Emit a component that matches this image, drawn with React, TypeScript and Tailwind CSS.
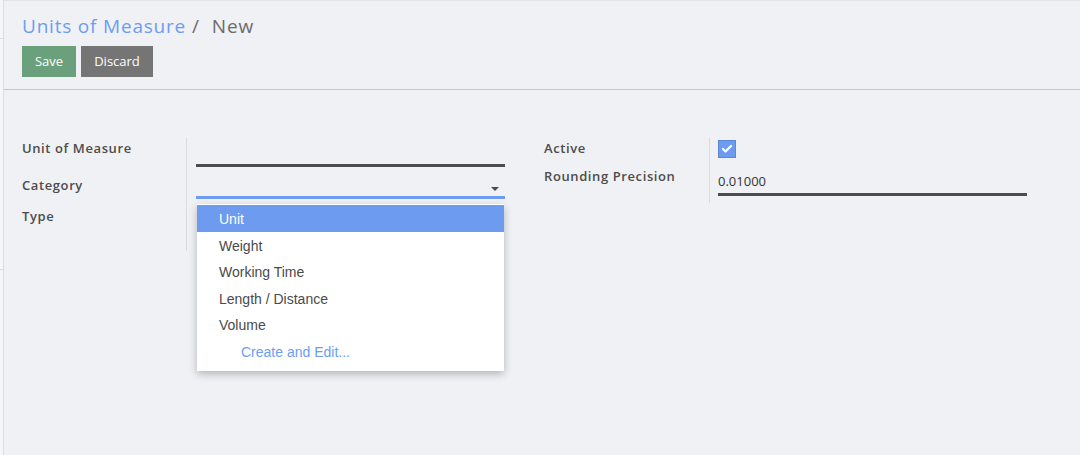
import { Check } from "lucide-react";

const categories = ["Unit", "Weight", "Working Time", "Length / Distance", "Volume"];

const labelCls = "text-[13px] font-semibold tracking-[0.6px] text-[#4c4c4c]";

export default function App() {
  return (
    <div
      className="flex h-[455px] w-[1080px] overflow-hidden bg-[#f0f1f5] text-[#4c4c4c]"
      style={{ fontFamily: '"Open Sans", sans-serif' }}
    >
      {/* left sliver of the sidebar */}
      <div className="flex w-[4px] flex-col border-r border-[#dcdde3] bg-[#f5f6f8]">
        <div className="h-[39px] border-b border-[#dcdde3]" />
        <div className="h-[231px] border-b border-[#dcdde3]" />
      </div>

      <div className="flex flex-1 flex-col border-t border-[#e3e4ea]">
        {/* control panel */}
        <div className="border-b border-[#c5c5d2] px-[18px] pt-[11px] pb-[12px]">
          <div className="flex items-center text-[19px] leading-[28px] tracking-[0.8px]">
            <span className="text-[#6c9df0]">Units of Measure</span>
            <span className="ml-[6px] text-[#6b6b6b]">/</span>
            <span className="ml-[12px] text-[#6b6b6b]">New</span>
          </div>
          <div className="mt-[6px] flex gap-[5px]">
            <button className="h-[31px] w-[54px] bg-[#6aa17c] text-[13px] text-white">Save</button>
            <button className="h-[31px] w-[72px] bg-[#757575] text-[13px] text-white">Discard</button>
          </div>
        </div>

        {/* form */}
        <div className="flex items-start px-[18px] pt-[48px]">
          {/* left group */}
          <div className="flex w-[522px]">
            <div className="flex w-[165px] flex-col border-r border-[#dadbe0] pb-[25px]">
              <div className={`${labelCls} h-[37px] leading-[20px]`}>Unit of Measure</div>
              <div className={`${labelCls} h-[31px] leading-[20px]`}>Category</div>
              <div className={`${labelCls} leading-[20px]`}>Type</div>
            </div>
            <div className="relative flex w-[318px] flex-col pl-[9px]">
              <div className="mt-[26px] h-[3px] w-[309px] bg-[#4c4c4c]" />
              <div className="relative mt-[29px] h-[3px] w-[309px] bg-[#6c9df0]">
                <span className="absolute right-[6px] bottom-[8px] h-0 w-0 border-x-[4px] border-t-[4px] border-x-transparent border-t-[#4c4c4c]" />
              </div>
              {/* dropdown */}
              <div
                className="absolute left-[10px] top-[66px] z-10 w-[307px] bg-white pt-px pb-[6px] shadow-[0_3px_8px_rgba(0,0,0,0.25)]"
                style={{ fontFamily: '"Liberation Sans", Arial, sans-serif' }}
              >
                {categories.map((c, i) => (
                  <div
                    key={c}
                    className={`h-[26.6px] pl-[22px] text-[14px] leading-[28px] ${
                      i === 0 ? "bg-[#6c9bef] text-white" : "text-[#4a4a4a]"
                    }`}
                  >
                    {c}
                  </div>
                ))}
                <div className="h-[27px] pl-[44px] text-[14px] leading-[28px] text-[#6c9df0]">
                  Create and Edit...
                </div>
              </div>
            </div>
          </div>

          {/* right group */}
          <div className="flex">
            <div className="flex w-[166px] flex-col border-r border-[#dadbe0] pb-[17px]">
              <div className={`${labelCls} h-[28px] leading-[20px]`}>Active</div>
              <div className={`${labelCls} leading-[20px]`}>Rounding Precision</div>
            </div>
            <div className="flex flex-col pl-[8px] pt-[2px]">
              <div className="flex h-[18px] w-[18px] items-center justify-center border border-[#5b87d6] bg-[#6c9bef]">
                <Check className="h-[12px] w-[12px] text-white" strokeWidth={4.5} />
              </div>
              <div className="mt-[14px] text-[13px] leading-[18px] text-[#333]">0.01000</div>
              <div className="mt-[3px] h-[3px] w-[309px] bg-[#4c4c4c]" />
            </div>
          </div>
        </div>
      </div>
    </div>
  );
}
